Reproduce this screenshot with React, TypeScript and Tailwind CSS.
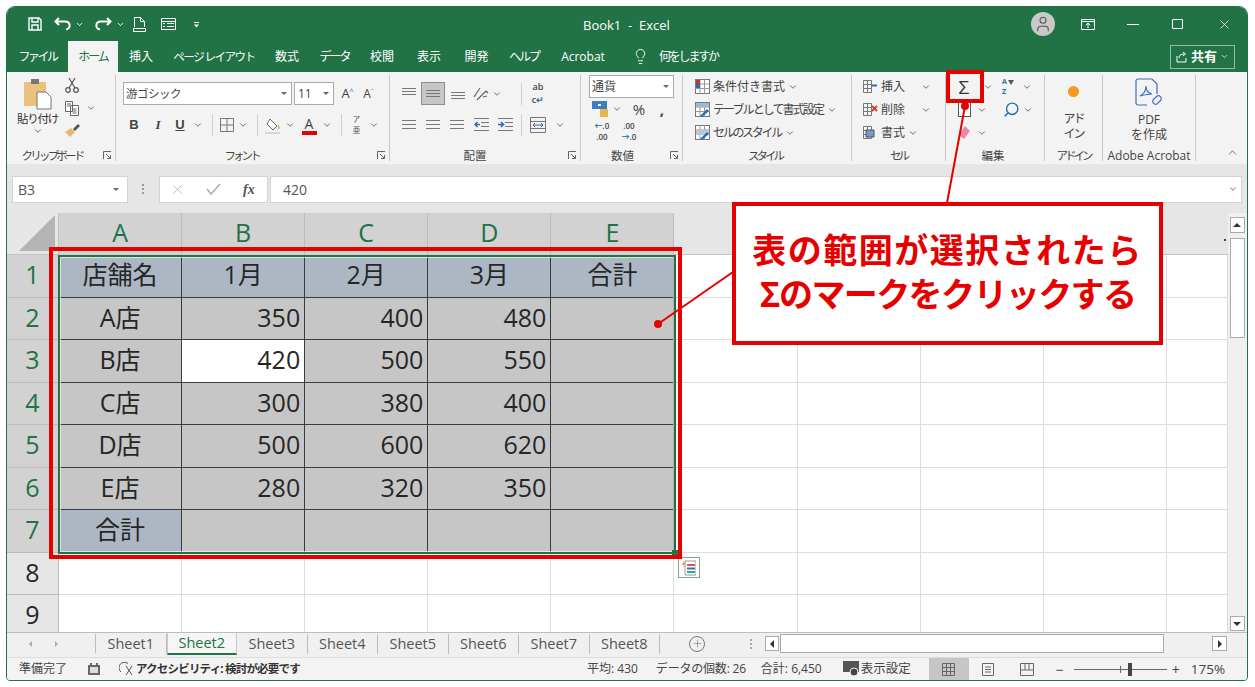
import { ReactNode } from "react";
import { ChevronDown, ChevronUp, Lightbulb, Plus, Search, User, X } from "lucide-react";

const Chev = ({ className = "text-[#555]" }: { className?: string }) => (
  <ChevronDown size={10} strokeWidth={2} className={className} />
);

const Launcher = () => (
  <svg width="9" height="9" viewBox="0 0 9 9" className="absolute right-[3px] bottom-[1px]" fill="none" stroke="#666">
    <path d="M.5 8V.5H8M3 3l4.5 4.5M7.5 4v3.5H4" />
  </svg>
);

const Group = ({
  label,
  className,
  labelClass = "",
  children,
  launcher,
}: {
  label: string;
  className: string;
  labelClass?: string;
  children: ReactNode;
  launcher?: boolean;
}) => (
  <div className={`relative flex h-[86px] shrink-0 flex-col border-r border-[#c8c8c8] ${className}`}>
    <div className="flex-1">{children}</div>
    <div className={`h-[11px] text-center text-[11.5px] leading-[11px] whitespace-nowrap text-[#444] ${labelClass}`}>{label}</div>
    {launcher && <Launcher />}
  </div>
);

const Lines = ({ w = 14, rows = 3, start = 1.5, step = 4 }: { w?: number; rows?: number; start?: number; step?: number }) => (
  <svg width={w} height="11" viewBox={`0 0 ${w} 11`} stroke="#777">
    {Array.from({ length: rows }).map((_, i) => (
      <path key={i} d={`M0 ${start + i * step}H${w}`} />
    ))}
  </svg>
);

const Sep = () => <div className="h-[22px] w-px bg-[#d0d0d0]" />;

const StyleIcon = ({ kind }: { kind: number }) => (
  <svg width="17" height="17" viewBox="0 0 17 17" fill="none">
    <rect x="1.5" y="1.5" width="14" height="14" fill="#fff" stroke="#777" />
    <path d="M1.5 6h14M1.5 10.5h14M6 1.5v14M10.5 1.5v14" stroke="#999" />
    {kind === 0 && <path d="M2 2h4v4H2z" fill="#c0392b" />}
    {kind === 0 && <path d="M2 6h4v4H2z" fill="#2b6cb0" />}
    {kind === 1 && <path d="M2 2h13v4H2z" fill="#9db8d9" />}
    {kind === 2 && <path d="M2 6h13v5H2z" fill="#b8c7d9" />}
    {kind > 0 && <path d="M6 15l7-7 2 2-7 6z" fill="#2b6cb0" />}
  </svg>
);

const CellIcon = ({ kind }: { kind: number }) => (
  <svg width="16" height="16" viewBox="0 0 16 16" fill="none" stroke="#777">
    <path d="M1.5 1.5h8v4h-8zM1.5 5.5h8v4h-8zM1.5 9.5h8v4h-8zM5.5 1.5v12" />
    {kind === 0 && <path d="M10 6.5h5" stroke="#2b6cb0" strokeWidth="2" />}
    {kind === 1 && <path d="M10 4l5 5M15 4l-5 5" stroke="#d83b2d" strokeWidth="1.8" />}
    {kind === 2 && <path d="M4 5h8v7H4z" fill="#6f9bd1" stroke="#555" />}
  </svg>
);

const SheetTab = ({ name, active }: { name: string; active?: boolean }) => (
  <div
    className={`flex h-full w-[70.5px] items-center justify-center text-[14.5px] ${
      active ? "border-b-2 border-[#217346] border-x border-x-[#c8c8c8] bg-[#f6f6f6] text-[#217346]" : "text-[#555]"
    }`}
  >
    <span className={active ? "" : "w-full border-r border-[#bdbdbd] text-center leading-[20px]"}>{name}</span>
  </div>
);

const colsHead = ["A", "B", "C", "D", "E", "F", "G", "H", "I", "J"];

const tableData = [
  ["店舗名", "1月", "2月", "3月", "合計"],
  ["A店", "350", "400", "480", ""],
  ["B店", "420", "500", "550", ""],
  ["C店", "300", "380", "400", ""],
  ["D店", "500", "600", "620", ""],
  ["E店", "280", "320", "350", ""],
  ["合計", "", "", "", ""],
];

const cellClass = (row: number, col: number) => {
  if (row > 6 || col > 4) return "border-r border-b border-[#dcdcdc] bg-white";
  let bg = "bg-[#c6c6c6]";
  if (row === 0 || (row === 6 && col === 0)) bg = "bg-[#acb7c3]";
  if (row === 2 && col === 1) bg = "bg-white";
  return `border-r border-b border-[#3c3c3c] ${bg}`;
};

const Sheet = () => (
  <div className="relative grid flex-1 grid-cols-[52px_repeat(9,123.1px)_1fr] grid-rows-[42px_repeat(9,42.5px)] overflow-hidden bg-white text-[25px] text-[#262626]">
    <div className="flex items-end justify-end border-r border-b border-[#c4c4c4] bg-[#e6e6e6] pr-[3px] pb-[3px]">
      <svg width="36" height="36" viewBox="0 0 36 36">
        <path d="M36 0V36H0z" fill="#b5b5b5" />
      </svg>
    </div>
    {colsHead.map((c, i) => (
      <div
        key={c}
        className={`flex items-center justify-center pb-[3px] ${
          i < 5 ? "border-r border-[#bcbcbc] bg-[#d2d2d2] text-[#217346]" : "border-b border-[#c4c4c4] bg-[#e6e6e6]"
        }`}
      >
        {i < 5 ? c : ""}
      </div>
    ))}
    {Array.from({ length: 9 }).map((_, r) => (
      <div key={r} className="contents">
        <div
          className={`flex items-center justify-center border-r border-b border-[#bcbcbc] pb-[2px] ${
            r < 7 ? "bg-[#d2d2d2] text-[#217346]" : "bg-[#e6e6e6]"
          }`}
        >
          {r + 1}
        </div>
        {colsHead.map((_, c) => {
          const value = tableData[r]?.[c] ?? "";
          const isCenter = r === 0 || c === 0;
          return (
            <div
              key={c}
              className={`flex items-center pb-[2px] ${isCenter ? "justify-center" : "justify-end pr-[4px]"} ${cellClass(r, c)}`}
            >
              {value}
            </div>
          );
        })}
      </div>
    ))}
    <span className="absolute top-[26px] right-[2px] h-[2px] w-[2px] bg-[#444]" />
  </div>
);

export default function App() {
  return (
    <div
      className="relative h-[687px] w-[1255px] overflow-hidden bg-white text-[#444]"
      style={{ fontFamily: '"Open Sans", "Noto Sans CJK JP", sans-serif' }}
    >
      <div className="absolute top-[6px] left-[6px] flex h-[675px] w-[1242px] flex-col overflow-hidden rounded-t-[9px] rounded-b-[4px] border border-[#217346] bg-[#f3f3f3]">
        {/* title bar */}
        <div className="relative flex h-[34px] shrink-0 items-center bg-[#217346] pl-[21px] text-white">
          <svg width="14" height="14" viewBox="0 0 14 14" fill="none" stroke="#fff" strokeWidth="1.4">
            <path d="M1 1h10l2 2v10H1zM4 1v4h6V1M4 13V8h6v5" />
          </svg>
          <svg width="18" height="14" viewBox="0 0 18 14" fill="none" stroke="#fff" strokeWidth="2" className="ml-[12px]">
            <path d="M5 1L1.5 4.5 5 8M2 4.5h9c6 0 6 7 1 8" />
          </svg>
          <ChevronDown size={9} strokeWidth={2.5} className="ml-[3px]" />
          <svg width="18" height="14" viewBox="0 0 18 14" fill="none" stroke="#fff" strokeWidth="2" className="ml-[10px]">
            <path d="M13 1l3.5 3.5L13 8M16 4.5H7c-6 0-6 7-1 8" />
          </svg>
          <ChevronDown size={9} strokeWidth={2.5} className="ml-[4px]" />
          <svg width="13" height="15" viewBox="0 0 13 15" fill="none" stroke="#fff" className="ml-[8px]">
            <path d="M1.5 10V.5h6l4 4V10M7.5.5v4h4M.5 11.5h12v3H.5z" />
          </svg>
          <svg width="15" height="12" viewBox="0 0 15 12" fill="none" stroke="#fff" className="ml-[15px]">
            <path d="M.5.5h14v11H.5zM.5 3.5h14M6 5.5h7M6 8.5h7M2 5.5h2M2 8.5h2" />
          </svg>
          <svg width="7" height="7" viewBox="0 0 7 7" fill="#fff" className="ml-[17px]">
            <path d="M1 1h5v1H1zM1 3.5h5L3.5 6.500z" />
          </svg>
          <div className="absolute left-[576px] top-[9px] text-[13px] leading-[18px]">Book1&nbsp; -&nbsp; Excel</div>
          <div className="ml-auto flex items-center pr-[15px]">
            <div className="flex h-[24px] w-[24px] items-center justify-center rounded-full bg-[#c9c9c9]">
              <User size={18} strokeWidth={1.4} className="text-[#555]" />
            </div>
            <svg width="14" height="11" viewBox="0 0 14 11" fill="none" stroke="#fff" className="ml-[26px]">
              <path d="M.5.5h13v10H.5zM.5 2.500h13M7 9V4.500M5 6l2-2 2 2" />
            </svg>
            <div className="ml-[32px] h-px w-[12px] bg-white" />
            <div className="ml-[33px] h-[10px] w-[11px] rounded-[1px] border border-white" />
            <X size={15} strokeWidth={1.2} className="ml-[34px]" />
          </div>
        </div>

        {/* tabs */}
        <div className="flex h-[31px] shrink-0 items-center bg-[#217346] text-center text-[12px] text-white">
          <div className="w-[61px] tracking-[-2.5px]">ファイル</div>
          <div className="flex h-full w-[50px] items-center justify-center bg-[#f3f3f3] tracking-[-2px] text-[#217346]">ホーム</div>
          <div className="w-[46px]">挿入</div>
          <div className="w-[100px] text-[11.5px] tracking-[-1.500px] whitespace-nowrap">ページ レイアウト</div>
          <div className="w-[46px]">数式</div>
          <div className="w-[49px] tracking-[-2px]">データ</div>
          <div className="w-[46px]">校閲</div>
          <div className="w-[48px]">表示</div>
          <div className="w-[47px]">開発</div>
          <div className="w-[48px] tracking-[-2px]">ヘルプ</div>
          <div className="w-[70px]">Acrobat</div>
          <Lightbulb size={17} strokeWidth={1.3} className="ml-[14px]" />
          <div className="ml-[10px] tracking-[-2.2px]">何をしますか</div>
          <div className="mr-[12px] ml-auto flex h-[24px] w-[65px] items-center justify-center gap-[3px] border border-[#8fbba3] text-[13px] font-bold">
            <svg width="12" height="12" viewBox="0 0 12 12" fill="none" stroke="#fff">
              <path d="M1 5v6h9V7M3 7c0-3 2-4 5-4M7 1l2.500 2L7 5" />
            </svg>
            共有
            <ChevronDown size={9} strokeWidth={2} />
          </div>
        </div>

        {/* ribbon */}
        <div className="flex h-[92px] shrink-0 items-center text-[12px] text-[#444]">
          <Group label="クリップボード" className="w-[109px]" labelClass="pr-[18px] tracking-[-2.8px]" launcher>
            <div className="flex">
              <div className="ml-[6px] flex w-[49px] flex-col items-center">
                <svg width="28" height="31" viewBox="0 0 28 31" className="mt-[4px]">
                  <path d="M0 3h22v24H0z" fill="#eac27e" />
                  <path d="M7 0h8v5H7z" fill="#777" />
                  <path d="M13 13h9l5 5v12H13z" fill="#fff" stroke="#777" />
                </svg>
                <div className="mt-[1px] text-[11.5px] leading-[15px] tracking-[-1.2px] whitespace-nowrap text-[#333]">貼り付け</div>
                <Chev />
              </div>
              <div className="flex w-[20px] flex-col items-center gap-[8px] pt-[2px]">
                <svg width="14" height="16" viewBox="0 0 14 16" fill="none" stroke="#555" strokeWidth="1.2">
                  <circle cx="3" cy="13" r="2.300" />
                  <circle cx="11" cy="13" r="2.300" />
                  <path d="M4 11L10 1M10 11L4 1" />
                </svg>
                <svg width="14" height="15" viewBox="0 0 14 15" fill="#fff" stroke="#666">
                  <path d="M.5.5h7v10h-7zM5.500 4.500h8v10h-8zM2 3h4M2 5h3M7.500 8h4M7.500 10h4M7.500 12h4" />
                </svg>
                <svg width="15" height="13" viewBox="0 0 15 13">
                  <path d="M0 8l6-4 4 4-5 5z" fill="#e5b96c" />
                  <path d="M8 5l5-5 2 2-5 5z" fill="#555" />
                </svg>
              </div>
              <div className="flex w-[14px] items-start justify-center pl-[3px] pt-[28px]">
                <Chev />
              </div>
            </div>
          </Group>

          <Group label="フォント" className="w-[274px]" labelClass="pr-[22px] tracking-[-3px]" launcher>
            <div className="mt-[7px] flex h-[23px] items-center pl-[7px]">
              <div className="flex h-[23px] w-[169px] items-center justify-between border border-[#ababab] bg-white pr-[4px] pl-[2px] text-[11.5px] tracking-[-0.5px]">
                游ゴシック
                <span className="h-0 w-0 border-x-[3px] border-t-[3px] border-x-transparent border-t-[#666]" />
              </div>
              <div className="ml-[2px] flex h-[23px] w-[40px] items-center justify-between border border-[#ababab] bg-white pr-[4px] pl-[3px] text-[12px]">
                11
                <span className="h-0 w-0 border-x-[3px] border-t-[3px] border-x-transparent border-t-[#666]" />
              </div>
              <div className="ml-[3px] w-[21px] text-center text-[13px]">
                A<sup className="text-[7px] text-[#2b6cb0]">^</sup>
              </div>
              <div className="w-[21px] text-center text-[12px]">
                A<sup className="text-[7px] text-[#2b6cb0]">ˇ</sup>
              </div>
            </div>
            <div className="mt-[9px] flex h-[22px] items-center pl-[6px] text-[13px]">
              <div className="w-[24px] text-center font-bold" style={{ fontFamily: '"Liberation Sans", sans-serif' }}>B</div>
              <div className="w-[24px] text-center font-bold italic" style={{ fontFamily: '"Liberation Serif", serif' }}>I</div>
              <div className="w-[20px] text-center font-bold underline" style={{ fontFamily: '"Liberation Sans", sans-serif' }}>U</div>
              <div className="flex w-[16px] justify-center"><Chev /></div>
              <div className="flex w-[13px] justify-center"><Sep /></div>
              <div className="flex w-[16px] justify-center">
                <svg width="14" height="14" viewBox="0 0 14 14" fill="none" stroke="#777">
                  <path d="M.5.5h13v13H.5zM7 .5v13M.5 7h13" />
                </svg>
              </div>
              <div className="flex w-[16px] justify-center"><Chev /></div>
              <div className="flex w-[13px] justify-center"><Sep /></div>
              <div className="flex w-[17px] justify-center">
                <svg width="16" height="17" viewBox="0 0 16 17" fill="none">
                  <path d="M5 2l7 7-4 4-6-6z" stroke="#666" fill="#fff" />
                  <path d="M13 7c2 3 2 5 1 5s-1-2-1-5z" fill="#e9a23b" />
                  <path d="M0 15h15v2H0z" fill="#c9d9ec" />
                </svg>
              </div>
              <div className="flex w-[18px] justify-center"><Chev /></div>
              <div className="flex w-[20px] flex-col items-center text-[14px] leading-[15px] text-[#444]">
                A
                <div className="h-[4px] w-[15px] bg-[#e60000]" />
              </div>
              <div className="flex w-[16px] justify-center"><Chev /></div>
              <div className="flex w-[13px] justify-center"><Sep /></div>
              <div className="flex w-[17px] flex-col items-center text-[7.500px] leading-[11px] text-[#555]">
                <span>ア</span>
                <span>亜</span>
              </div>
              <div className="flex w-[18px] justify-center"><Chev /></div>
            </div>
          </Group>

          <Group label="配置" className="w-[191px]" labelClass="pr-[20px]" launcher>
            <div className="mt-[7px] flex h-[23px] items-center pl-[7px]">
              <div className="flex w-[24px] justify-center"><Lines start={0.5} step={3} /></div>
              <div className="flex h-[23px] w-[24px] items-center justify-center border border-[#8e8e8e] bg-[#c6c6c6]"><Lines start={2.5} step={3} /></div>
              <div className="flex w-[25px] justify-center"><Lines start={4.5} step={3} /></div>
              <div className="flex w-[20px] justify-center">
                <svg width="17" height="15" viewBox="0 0 17 15" fill="none" stroke="#666" strokeWidth="1.200">
                  <path d="M2 11L8 2M5 14L14 5M11 11l4-1" />
                  <path d="M14 5l2 2" stroke="#2b6cb0" />
                </svg>
              </div>
              <div className="flex w-[14px] justify-center"><Chev /></div>
              <div className="ml-[9px] flex w-[16px] justify-center"><Sep /></div>
              <div className="flex w-[18px] flex-col items-center text-[9px] leading-[12.500px] font-semibold text-[#444]">
                <span>ab</span>
                <span>c<span className="text-[#2b6cb0]">↵</span></span>
              </div>
            </div>
            <div className="mt-[8px] flex h-[23px] items-center pl-[7px]">
              <div className="flex w-[24px] justify-center"><Lines /></div>
              <div className="flex w-[24px] justify-center"><Lines /></div>
              <div className="flex w-[24px] justify-center"><Lines /></div>
              <div className="flex w-[24px] justify-center">
                <svg width="15" height="13" viewBox="0 0 15 13" fill="none" stroke="#777">
                  <path d="M0 .5h15M7 4.500h8M7 8.500h8M0 12.500h15" />
                  <path d="M6 6.500H1M3.500 4L1 6.500 3.500 9" stroke="#2b6cb0" strokeWidth="1.500" />
                </svg>
              </div>
              <div className="flex w-[24px] justify-center">
                <svg width="15" height="13" viewBox="0 0 15 13" fill="none" stroke="#777">
                  <path d="M0 .5h15M7 4.500h8M7 8.500h8M0 12.500h15" />
                  <path d="M0 6.500h5M3 4l2.500 2.500L3 9" stroke="#2b6cb0" strokeWidth="1.500" />
                </svg>
              </div>
              <div className="flex w-[8px] justify-center"><Sep /></div>
              <div className="flex w-[26px] justify-center">
                <svg width="16" height="16" viewBox="0 0 16 16" fill="none" stroke="#777">
                  <path d="M.5.500h15v15H.5zM.5 4.500h15M.5 11.500h15" />
                  <path d="M3 8h10M5 6L3 8l2 2M11 6l2 2-2 2" stroke="#2b6cb0" />
                </svg>
              </div>
              <div className="flex w-[18px] justify-center"><Chev /></div>
            </div>
          </Group>

          <Group label="数値" className="w-[102px]" labelClass="pr-[18px]" launcher>
            <div className="ml-[8px] flex h-[23px] w-[85px] items-center justify-between border border-[#ababab] bg-white pr-[4px] pl-[2px] text-[12px]">
              通貨
              <span className="h-0 w-0 border-x-[3px] border-t-[3px] border-x-transparent border-t-[#666]" />
            </div>
            <div className="flex h-[22px] items-center pl-[8px]">
              <div className="flex w-[22px] justify-center">
                <svg width="17" height="16" viewBox="0 0 17 16">
                  <path d="M0 0h15v8H0z" fill="#3a7fc1" />
                  <path d="M6 4h3" stroke="#fff" strokeWidth="2" />
                  <path d="M8 8h8v8H8z" fill="#e9b44c" />
                </svg>
              </div>
              <div className="flex w-[12px] justify-center"><Chev /></div>
              <div className="w-[32px] text-center text-[15px]">%</div>
              <div className="w-[14px] text-center text-[15px] font-bold">,</div>
            </div>
            <div className="flex h-[22px] items-center pl-[9px] text-[8px] leading-[11px] font-semibold">
              <div className="w-[24px] text-center">
                <span className="text-[#2b6cb0]">←</span>.0<br />.00
              </div>
              <div className="w-[30px] text-center">
                .00<br /><span className="text-[#2b6cb0]">→</span>.0
              </div>
            </div>
          </Group>

          <Group label="スタイル" className="w-[169px]" labelClass="pr-[4px] tracking-[-3px]">
            <div className="pl-[11px] text-[12px] whitespace-nowrap">
              <div className="flex h-[23px] items-center gap-[1px]">
                <StyleIcon kind={0} />
                <span className="ml-[1px]">条件付き書式</span>
                <Chev className="ml-[2px] text-[#555]" />
              </div>
              <div className="flex h-[23px] items-center gap-[1px]">
                <StyleIcon kind={1} />
                <span className="ml-[1px] tracking-[-1.900px]">テーブルとして書式設定</span>
                <Chev className="ml-[3px] text-[#555]" />
              </div>
              <div className="flex h-[23px] items-center gap-[1px]">
                <StyleIcon kind={2} />
                <span className="ml-[1px] tracking-[-2.300px]">セルのスタイル</span>
                <Chev className="ml-[3px] text-[#555]" />
              </div>
            </div>
          </Group>

          <Group label="セル" className="w-[94px]" labelClass="tracking-[-3px]">
            <div className="pl-[10px] text-[12px]">
              <div className="flex h-[23px] items-center gap-[3px]">
                <CellIcon kind={0} />
                <span className="w-[37px]">挿入</span>
                <Chev />
              </div>
              <div className="flex h-[23px] items-center gap-[3px]">
                <CellIcon kind={1} />
                <span className="w-[37px]">削除</span>
                <Chev />
              </div>
              <div className="flex h-[23px] items-center gap-[3px]">
                <CellIcon kind={2} />
                <span>書式</span>
                <Chev />
              </div>
            </div>
          </Group>

          <Group label="編集" className="w-[99px]" labelClass="pr-[4px]">
            <div className="pl-[7px]">
              <div className="flex h-[23px] items-center">
                <div className="w-[22px] text-center text-[19px] leading-[20px] text-[#333]">Σ</div>
                <div className="ml-[6px] flex w-[14px] justify-center"><Chev /></div>
                <div className="ml-[4px] flex w-[18px] justify-center text-[7px] leading-[9.500px] font-bold text-[#2b6cb0]">
                  <span>A<br />Z</span>
                  <span className="mt-[3px] ml-[1px] h-0 w-0 border-x-[3.500px] border-t-[5px] border-x-transparent border-t-[#555]" />
                </div>
                <div className="ml-[3px] flex w-[14px] justify-center"><Chev /></div>
              </div>
              <div className="flex h-[23px] items-center">
                <div className="flex w-[22px] justify-center">
                  <div className="h-[15px] w-[13px] border border-[#555] bg-white" />
                </div>
                <div className="flex w-[14px] justify-center"><Chev /></div>
                <div className="ml-[11px] flex w-[22px] justify-center">
                  <Search size={17} strokeWidth={2} className="-scale-x-100 text-[#2b6cb0]" />
                </div>
                <div className="flex w-[12px] justify-center"><Chev /></div>
              </div>
              <div className="flex h-[23px] items-center">
                <div className="flex w-[22px] justify-center">
                  <svg width="12" height="14" viewBox="0 0 12 14">
                    <path d="M7 0l5 5-6 8-5-4z" fill="#ec8aa6" />
                  </svg>
                </div>
                <div className="flex w-[14px] justify-center"><Chev /></div>
              </div>
            </div>
          </Group>

          <Group label="アドイン" className="w-[58px]" labelClass="tracking-[-3px]">
            <div className="flex flex-col items-center text-[12px] leading-[15px]">
              <div className="mt-[11px] h-[11px] w-[11px] rounded-full bg-[#f59a23] blur-[0.5px]" />
              <div className="mt-[14px] tracking-[-2px]">アド</div>
              <div className="tracking-[-2px]">イン</div>
            </div>
          </Group>

          <Group label="Adobe Acrobat" className="w-[93px]" labelClass="text-[12px]">
            <div className="flex flex-col items-center text-[12px] leading-[15px]">
              <svg width="28" height="30" viewBox="0 0 28 30" fill="none" stroke="#3f6fb5" strokeWidth="1.200" className="mt-[3px]">
                <path d="M12 27H3a2 2 0 0 1-2-2V3a2 2 0 0 1 2-2h14l5 5v10" />
                <path d="M5 18c4-2 6-6 6-10 0 4 2 7 6 8-4 0-8 1-12 2z" />
                <path d="M18 22l4-4a3 3 0 0 1 4 4l-4 4a3 3 0 0 1-4-4z" />
              </svg>
              <div className="mt-[4px]">PDF</div>
              <div>を作成</div>
            </div>
          </Group>
          <div className="flex h-[86px] flex-1 items-end justify-end pr-[8px] pb-[2px]">
            <ChevronUp size={13} strokeWidth={1.5} className="text-[#555]" />
          </div>
        </div>

        {/* formula bar */}
        <div className="flex h-[49px] shrink-0 items-center bg-[#e6e6e6] pt-[1px] pl-[5px] text-[14px] text-[#555]">
          <div className="flex h-[27px] w-[116px] items-center justify-between border border-[#d4d4d4] bg-white pr-[8px] pl-[5px] text-[14px]">
            B3
            <span className="h-0 w-0 border-x-[3px] border-t-[3px] border-x-transparent border-t-[#666]" />
          </div>
          <div className="mr-[15px] ml-[14px] flex flex-col gap-[2px]">
            <span className="h-[2px] w-[2px] bg-[#999]" />
            <span className="h-[2px] w-[2px] bg-[#999]" />
            <span className="h-[2px] w-[2px] bg-[#999]" />
          </div>
          <div className="flex h-[27px] w-[109px] items-center border border-[#d4d4d4] bg-white pl-[10px]">
            <X size={15} strokeWidth={1.2} className="text-[#aaa]" />
            <svg width="15" height="12" viewBox="0 0 15 12" fill="none" stroke="#aaa" strokeWidth="1.500" className="ml-[21px]">
              <path d="M1 6l4 5 9-10" />
            </svg>
            <span className="ml-[22px] text-[14px] font-semibold text-[#555] italic" style={{ fontFamily: '"Liberation Serif", serif' }}>fx</span>
          </div>
          <div className="ml-[2px] flex h-[27px] w-[972px] items-center justify-between border border-[#d4d4d4] bg-white pr-[3px] pl-[12px]">
            420
            <Chev />
          </div>
        </div>

        {/* sheet + vertical scroll */}
        <div className="flex h-[419px] shrink-0">
          <Sheet />
          <div className="flex w-[19px] shrink-0 flex-col items-center bg-[#f0f0f0] pt-[4px] pr-[1px] pb-[1px]">
            <div className="flex h-[16px] w-[15px] items-center justify-center border border-[#ababab] bg-white">
              <span className="h-0 w-0 border-x-[4px] border-b-[4px] border-x-transparent border-b-[#333]" />
            </div>
            <div className="mt-[5px] h-[100px] w-[15px] border border-[#ababab] bg-white" />
            <div className="mt-auto flex h-[15px] w-[15px] items-center justify-center border border-[#ababab] bg-white">
              <span className="h-0 w-0 border-x-[4px] border-t-[4px] border-x-transparent border-t-[#333]" />
            </div>
          </div>
        </div>

        {/* sheet tabs */}
        <div className="flex h-[25px] shrink-0 items-center border-t border-[#bdbdbd] bg-[#f0f0f0] pb-[3px]">
          <span className="ml-[22px] h-0 w-0 border-y-[3px] border-r-[3px] border-y-transparent border-r-[#aaa]" />
          <span className="ml-[23px] h-0 w-0 border-y-[3px] border-l-[3px] border-y-transparent border-l-[#aaa]" />
          <div className="ml-[37px] h-[19px] w-px bg-[#bdbdbd]" />
          <div className="flex h-[22px]">
            {["Sheet1", "Sheet2", "Sheet3", "Sheet4", "Sheet5", "Sheet6", "Sheet7", "Sheet8"].map((s) => (
              <SheetTab key={s} name={s} active={s === "Sheet2"} />
            ))}
          </div>
          <div className="ml-[29px] flex h-[16px] w-[16px] items-center justify-center rounded-full border border-[#777]">
            <Plus size={11} strokeWidth={1.2} className="text-[#666]" />
          </div>
          <div className="ml-[45px] flex flex-col gap-[2px]">
            <span className="h-[2px] w-[2px] bg-[#aaa]" />
            <span className="h-[2px] w-[2px] bg-[#aaa]" />
            <span className="h-[2px] w-[2px] bg-[#aaa]" />
          </div>
          <div className="ml-[13px] flex h-[15px] w-[14px] items-center justify-center border border-[#ababab] bg-white">
            <span className="h-0 w-0 border-y-[4px] border-r-[4px] border-y-transparent border-r-[#333]" />
          </div>
          <div className="ml-[1px] h-[19px] w-[384px] border border-[#ababab] bg-white" />
          <div className="ml-[48px] flex h-[15px] w-[15px] items-center justify-center border border-[#ababab] bg-white">
            <span className="h-0 w-0 border-y-[4px] border-l-[4px] border-y-transparent border-l-[#333]" />
          </div>
        </div>

        {/* status bar */}
        <div className="flex flex-1 items-center border-t border-[#dcdcdc] bg-[#f3f3f3] pl-[12px] text-[12px] text-[#444]">
          <span className="w-[50px] whitespace-nowrap">準備完了</span>
          <svg width="12" height="12" viewBox="0 0 12 12" className="ml-[19px]" fill="#666">
            <path d="M0 2h12v10H0z" />
            <path d="M2 4h8v6H2z" fill="#ddd" />
            <path d="M2 0h2v2H2zM8 0h2v2H8z" />
          </svg>
          <svg width="14" height="14" viewBox="0 0 14 14" fill="none" stroke="#555" className="ml-[19px]">
            <path d="M9 1.500A5.500 5.500 0 1 0 2 10M7 4l6 9M13 4l-6 9" />
          </svg>
          <span className="ml-[3px] w-[165px] text-[11.5px] font-bold tracking-[-0.8px] whitespace-nowrap text-[#333]">アクセシビリティ: 検討が必要です</span>
          <span className="ml-[286px] whitespace-nowrap">平均: 430</span>
          <span className="ml-[18px] tracking-[-0.2px] whitespace-nowrap">データの個数: 26</span>
          <span className="ml-[15px] whitespace-nowrap">合計: 6,450</span>
          <svg width="18" height="16" viewBox="0 0 18 16" className="ml-[21px]">
            <path d="M0 0h16v11H0z" fill="#555" />
            <circle cx="11" cy="11" r="4" fill="#444" stroke="#f3f3f3" />
          </svg>
          <span className="text-[12.500px] whitespace-nowrap">表示設定</span>
          <div className="ml-[18px] flex h-[22px] w-[40px] items-center justify-center bg-[#c6c6c6]">
            <svg width="13" height="13" viewBox="0 0 13 13" fill="none" stroke="#666">
              <path d="M.5.500h12v12H.5zM4.500.500v12M8.500.500v12M.5 4.500h12M.5 8.500h12" />
            </svg>
          </div>
          <svg width="12" height="13" viewBox="0 0 12 13" fill="none" stroke="#666" className="ml-[13px]">
            <path d="M.5.500h11v12H.5zM3 4h6M3 6.500h6M3 9h6" />
          </svg>
          <svg width="14" height="13" viewBox="0 0 14 13" fill="none" stroke="#666" className="ml-[26px]">
            <path d="M.5.500h13v12H.5zM.5 7h13M5 .500V7M9 .500V7" />
          </svg>
          <span className="ml-[22px] text-[14px]">−</span>
          <div className="relative ml-[10px] h-px w-[93px] bg-[#666]">
            <div className="absolute top-[-3px] left-[46px] h-[7px] w-px bg-[#666]" />
            <div className="absolute top-[-6px] left-[54px] h-[13px] w-[4px] bg-[#444]" />
          </div>
          <span className="ml-[5px] text-[14px]">+</span>
          <span className="ml-[11px] text-[13.500px] whitespace-nowrap">175%</span>
        </div>
      </div>

      {/* selection border, row 1 to 7 */}
      <div className="absolute top-[255px] left-[58px] h-[299px] w-[618px] border-2 border-[#217346]">
        <div className="h-full w-full border border-white/60" />
        <div className="absolute right-[-4px] bottom-[-4px] h-[6px] w-[6px] bg-[#217346]" />
      </div>

      {/* quick analysis button */}
      <div className="absolute top-[557px] left-[678px] flex h-[21px] w-[22px] items-center justify-center border border-[#7fa990] bg-white">
        <svg width="14" height="16" viewBox="0 0 14 16">
          <path d="M3 1h11v14H3z" fill="#fff" stroke="#999" />
          <path d="M5 4h8v2H5z" fill="#d9534f" />
          <path d="M5 7.500h8v2H5z" fill="#3a6fb5" />
          <path d="M5 11h8v2H5z" fill="#3aa58e" />
          <path d="M2 0L0 5h2L1 8l3-5H2z" fill="#e9a23b" />
        </svg>
      </div>

      {/* annotations */}
      <div className="absolute top-[247px] left-[49px] h-[312px] w-[633px] border-[4px] border-[#e60000]" />
      <div className="absolute top-[70px] left-[946px] h-[33px] w-[38px] border-[4px] border-[#e60000]" />
      <svg width="1255" height="687" viewBox="0 0 1255 687" className="pointer-events-none absolute top-0 left-0">
        <path d="M965 106L947 203M658 324L733 272" stroke="#e60000" strokeWidth="2" />
        <circle cx="965" cy="106" r="4" fill="#e60000" />
        <circle cx="658" cy="324" r="4" fill="#e60000" />
      </svg>
      <div
        className="absolute top-[202px] left-[732px] flex h-[143px] w-[431px] flex-col items-center justify-center border-[4px] border-[#e60000] bg-white pb-[5px] text-[34px] leading-[44px] font-bold whitespace-nowrap text-[#e60000]"
        style={{ fontFamily: '"Noto Sans CJK JP", sans-serif' }}
      >
        <div className="tracking-[1.500px]">表の範囲が選択されたら</div>
        <div className="tracking-[-1.600px]">Σのマークをクリックする</div>
      </div>
    </div>
  );
}
